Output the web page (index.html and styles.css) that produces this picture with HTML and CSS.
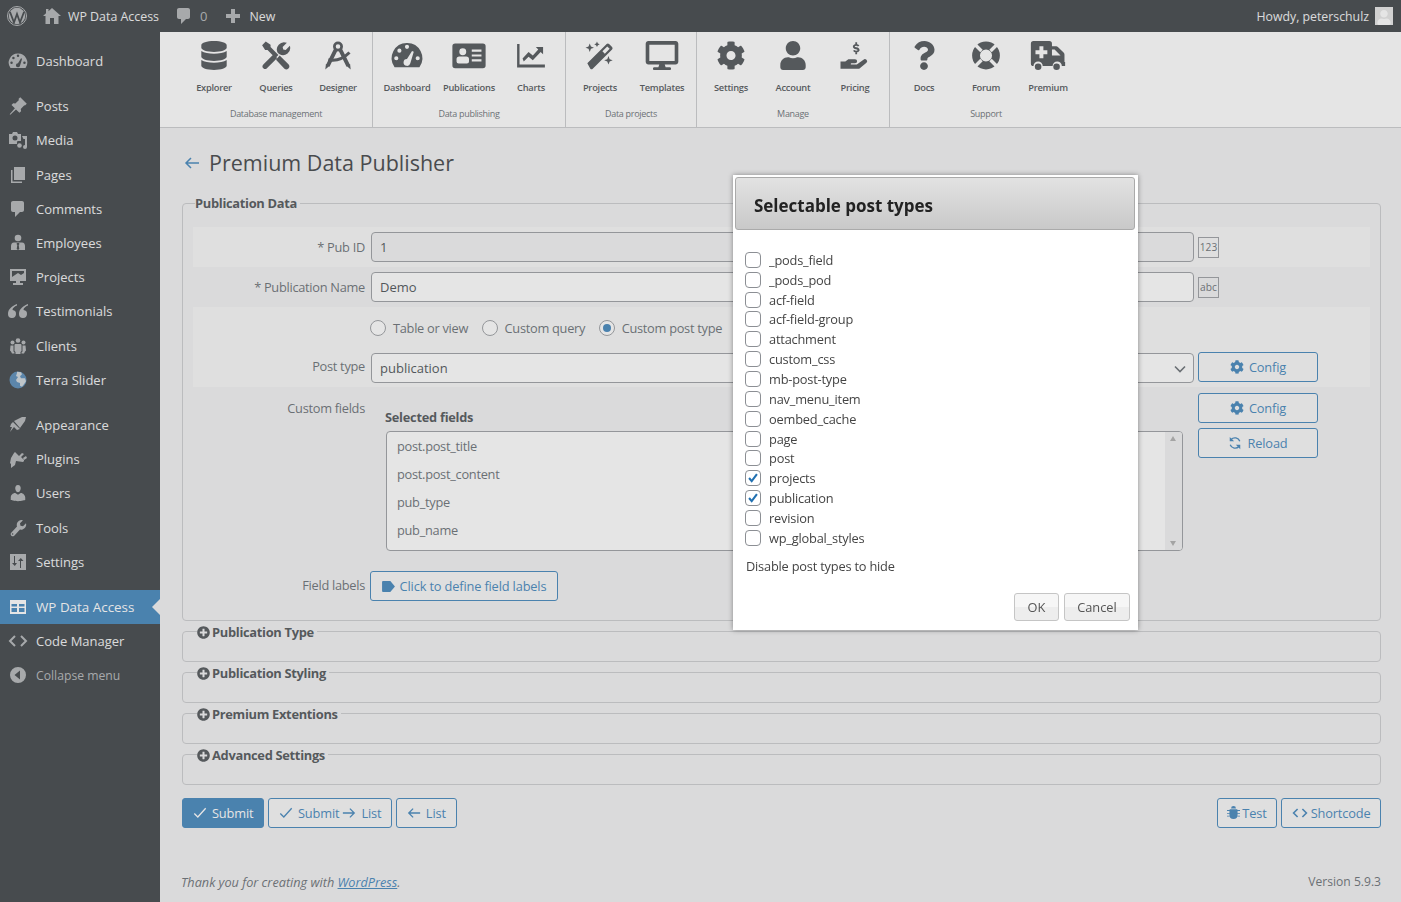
FILE: index.html
```html
<!DOCTYPE html>
<html lang="en">
<head>
<meta charset="utf-8">
<title>Premium Data Publisher</title>
<link rel="stylesheet" href="styles.css">
</head>
<body>
<svg class="defs" aria-hidden="true">
  <symbol id="i-db" viewBox="0 0 448 512"><path d="M448 73.143v45.714C448 159.143 347.667 192 224 192S0 159.143 0 118.857V73.143C0 32.857 100.333 0 224 0s224 32.857 224 73.143zM448 176v102.857C448 319.143 347.667 352 224 352S0 319.143 0 278.857V176c48.125 33.143 136.208 48.572 224 48.572S399.874 209.143 448 176zm0 160v102.857C448 479.143 347.667 512 224 512S0 479.143 0 438.857V336c48.125 33.143 136.208 48.572 224 48.572S399.874 369.143 448 336z"/></symbol>
  <symbol id="i-tools" viewBox="0 0 48 48"><path d="M1 7l6-6 8 5v4l13 13-5 5-13-13H6zM30 24l15 15a5 5 0 0 1-7 7L24 31zM3 39l17-17 6 6L9 45a4 4 0 0 1-6-6zM27 20A12 12 0 0 1 42 3l-7 7 1 4 4 1 7-7a12 12 0 0 1-17 14z"/></symbol>
  <symbol id="i-compass" viewBox="0 0 48 48"><g fill="none" stroke="currentColor"><circle cx="24" cy="9" r="6" stroke-width="4.500"/><path d="M20.500 14L7 41M27.500 14L41 41" stroke-width="6.500"/><path d="M8 31Q27 35 43 19" stroke-width="5"/></g><path d="M3 47l1-9 6 3zM45 47l-1-9-6 3z"/></symbol>
  <symbol id="i-gauge" viewBox="0 1 48 42"><path fill-rule="evenodd" d="M24 4a22 22 0 0 1 18 35H6A22 22 0 0 1 24 4zM21 9.500a3 3 0 1 0 6 0a3 3 0 1 0-6 0zM10 15a3 3 0 1 0 6 0a3 3 0 1 0-6 0zM5.500 26a3 3 0 1 0 6 0a3 3 0 1 0-6 0zM36.500 26a3 3 0 1 0 6 0a3 3 0 1 0-6 0zM19 32a5 5 0 0 0 9.800 1.400l5-17-2.500-1-7.300 11.700a5 5 0 0 0-5 4.900z"/></symbol>
  <symbol id="i-idcard" viewBox="-2 4 52 39"><path fill-rule="evenodd" d="M4 6h40a4 4 0 0 1 4 4v28a4 4 0 0 1-4 4H4a4 4 0 0 1-4-4V10a4 4 0 0 1 4-4zM10 18a5 5 0 1 0 10 0a5 5 0 1 0-10 0zM6 32a3 3 0 0 0 3 3h12a3 3 0 0 0 3-3v-3a4 4 0 0 0-4-4h-10a4 4 0 0 0-4 4zM28 15v3h14v-3zM28 22v3h14v-3zM28 29v3h14v-3z"/></symbol>
  <symbol id="i-chart" viewBox="0 0 48 48"><path d="M1 5h4v34h42v5H1zM10 29l10-11 7 6 9-10-4-4h12v12l-4-4-13 14-7-6-8 8z"/></symbol>
  <symbol id="i-wand" viewBox="0 0 48 48"><path fill-rule="evenodd" d="M3 37l32-32a3 3 0 0 1 4 0l5 5a3 3 0 0 1 0 4L12 46a3 3 0 0 1-4 0zM28 17l4 4 8-8-4-4z"/><path d="M7 4l2 5 5 2-5 2-2 5-2-5-5-2 5-2zM19 1l1.500 3 3 1.500-3 1.500L19 10l-1.500-3-3-1.500 3-1.500zM38 25l2 5 5 2-5 2-2 5-2-5-5-2 5-2z"/></symbol>
  <symbol id="i-desktop" viewBox="0 0 576 512"><path d="M528 0H48C21.500 0 0 21.500 0 48v320c0 26.500 21.500 48 48 48h192l-16 48h-72c-13.300 0-24 10.700-24 24s10.700 24 24 24h272c13.300 0 24-10.700 24-24s-10.700-24-24-24h-72l-16-48h192c26.500 0 48-21.500 48-48V48c0-26.500-21.500-48-48-48zm-16 352H64V64h448v288z"/></symbol>
  <symbol id="i-cog" viewBox="0 0 512 512"><path d="M487.400 315.700l-42.600-24.600c4.300-23.200 4.300-47 0-70.200l42.600-24.600c4.900-2.800 7.100-8.600 5.500-14-11.100-35.600-30-67.800-54.700-94.600-3.800-4.100-10-5.100-14.800-2.300L380.800 110c-17.900-15.400-38.500-27.300-60.800-35.100V25.800c0-5.600-3.900-10.500-9.400-11.700-36.700-8.200-74.300-7.800-109.200 0-5.500 1.200-9.400 6.100-9.400 11.700V75c-22.200 7.900-42.800 19.800-60.800 35.100L88.700 85.500c-4.900-2.800-11-1.900-14.800 2.300-24.700 26.700-43.600 58.900-54.700 94.600-1.700 5.400.6 11.200 5.500 14L67.300 221c-4.300 23.200-4.300 47 0 70.200l-42.600 24.600c-4.900 2.800-7.100 8.600-5.500 14 11.100 35.600 30 67.800 54.700 94.600 3.800 4.100 10 5.100 14.800 2.300l42.600-24.600c17.900 15.400 38.500 27.300 60.800 35.100v49.200c0 5.600 3.900 10.500 9.400 11.700 36.700 8.200 74.300 7.800 109.200 0 5.500-1.200 9.400-6.100 9.400-11.700v-49.200c22.200-7.900 42.800-19.800 60.800-35.100l42.600 24.600c4.900 2.800 11 1.900 14.800-2.300 24.700-26.700 43.600-58.900 54.700-94.600 1.500-5.500-.7-11.300-5.600-14.100zM256 336c-44.100 0-80-35.900-80-80s35.900-80 80-80 80 35.900 80 80-35.900 80-80 80z"/></symbol>
  <symbol id="i-user" viewBox="0 0 448 512"><path d="M224 256c70.700 0 128-57.300 128-128S294.700 0 224 0 96 57.300 96 128s57.300 128 128 128zm89.600 32h-16.700c-22.200 10.200-46.900 16-72.900 16s-50.600-5.800-72.900-16h-16.700C60.200 288 0 348.200 0 422.400V464c0 26.500 21.500 48 48 48h352c26.500 0 48-21.500 48-48v-41.600c0-74.200-60.200-134.400-134.400-134.400z"/></symbol>
  <symbol id="i-hand" viewBox="0 0 48 48"><path d="M0 34h8l5-4h11a3 3 0 0 1 0 7h-6a1 1 0 0 0 0 2h9l11-8a3.500 3.500 0 0 1 5 5L31 46H0z"/><path d="M30 8.500q-1-2-4-2t-4 2q0 3 4 3.500t4 3.500q-1 2-4 2t-4-2M26 2v4M26 18v4" fill="none" stroke="currentColor" stroke-width="3"/></symbol>
  <symbol id="i-question" viewBox="0 0 384 512"><path d="M202.021 0C122.202 0 70.503 32.703 29.914 91.026c-7.363 10.580-5.093 25.086 5.178 32.874l43.138 32.709c10.373 7.865 25.132 6.026 33.253-4.148 25.049-31.381 43.630-49.449 82.757-49.449 30.764 0 68.816 19.799 68.816 49.631 0 22.552-18.617 34.134-48.993 51.164-35.423 19.860-82.299 44.576-82.299 106.405V320c0 13.255 10.745 24 24 24h72.471c13.255 0 24-10.745 24-24v-5.773c0-42.860 125.268-44.645 125.268-160.627C377.504 66.256 286.902 0 202.021 0zM192 373.459c-38.196 0-69.271 31.075-69.271 69.271 0 38.195 31.075 69.270 69.271 69.270s69.271-31.075 69.271-69.271-31.075-69.270-69.271-69.270z"/></symbol>
  <symbol id="i-ring" viewBox="0 0 48 48"><path fill-rule="evenodd" d="M24 1a23 23 0 1 1 0 46a23 23 0 0 1 0-46zM14 24a10 10 0 1 0 20 0a10 10 0 1 0-20 0z"/><path class="ring-gap" d="M9 5l9.500 9.500-4 4L5 9zM39 5L29.500 14.500l4 4L43 9zM9 43l9.500-9.500-4-4L5 39zM39 43l-9.500-9.500 4-4L43 39z"/></symbol>
  <symbol id="i-amb" viewBox="0 2 52 44"><path fill-rule="evenodd" d="M4 2h24a4 4 0 0 1 4 4v4h6a4 4 0 0 1 3 1l9 9a4 4 0 0 1 1 3v11h1v6h-5a7 7 0 0 0-14 0H18a7 7 0 0 0-14 0 4 4 0 0 1-4-4V6a4 4 0 0 1 4-4zM13 10v6H7v6h6v6h6v-6h6v-6h-6v-6zM32 15v9h13l-9-9z"/><circle cx="11" cy="41" r="5"/><circle cx="39" cy="41" r="5"/></symbol>
  <symbol id="i-plus" viewBox="0 0 512 512"><path d="M256 8C119 8 8 119 8 256s111 248 248 248 248-111 248-248S393 8 256 8zm144 276c0 6.600-5.400 12-12 12h-92v92c0 6.600-5.400 12-12 12h-56c-6.600 0-12-5.400-12-12v-92h-92c-6.600 0-12-5.400-12-12v-56c0-6.600 5.400-12 12-12h92v-92c0-6.600 5.400-12 12-12h56c6.600 0 12 5.400 12 12v92h92c6.600 0 12 5.400 12 12v56z"/></symbol>
  <symbol id="i-check" viewBox="0 0 16 16"><path d="M1.500 8.500l4 4 9-10" fill="none" stroke="currentColor" stroke-width="1.500"/></symbol>
  <symbol id="i-right" viewBox="0 0 16 16"><path d="M1 8h13M9 3l5 5-5 5" fill="none" stroke="currentColor" stroke-width="1.500"/></symbol>
  <symbol id="i-left" viewBox="0 0 16 16"><path d="M15 8H2M7 3L2 8l5 5" fill="none" stroke="currentColor" stroke-width="1.500"/></symbol>
  <symbol id="i-code" viewBox="0 0 20 14"><path d="M7 2L2 7l5 5M13 2l5 5-5 5" fill="none" stroke="currentColor" stroke-width="2"/></symbol>
  <symbol id="i-bug" viewBox="0 0 16 16"><path d="M5 3a3 3 0 0 1 6 0zM4 4h8a1 1 0 0 1 1 1v6a5 5 0 0 1-10 0V5a1 1 0 0 1 1-1zM0 5h3v1H0zM13 5h3v1h-3zM0 8.500h3v1H0zM13 8.500h3v1h-3zM0 12h3v1H0zM13 12h3v1h-3z"/></symbol>
  <symbol id="i-sync" viewBox="0 0 16 16"><path d="M13.500 6A6 6 0 0 0 3.500 4M2.500 10a6 6 0 0 0 10 2" fill="none" stroke="currentColor" stroke-width="1.500"/><path d="M2 1v5h5zM14 15v-5H9z"/></symbol>
  <symbol id="i-tag" viewBox="0 0 14 12"><path d="M1 0h8l5 6-5 6H1a1 1 0 0 1-1-1V1a1 1 0 0 1 1-1z"/></symbol>
  <symbol id="d-pin" viewBox="0 0 20 20"><path d="M10.440 3.020l1.820-1.820 6.530 6.530-1.820 1.820-.630-.2-3.600 3.610.350 2.200-1.700 1.700-3.400-3.400-5.700 5.300-.6-.6 5.200-5.800-3.400-3.400 1.700-1.700 2.200.3 3.600-3.600z"/></symbol>
  <symbol id="d-media" viewBox="0 0 20 20"><path fill-rule="evenodd" d="M1 4h3l1-2h4l1 2h3v7H9.500a4 4 0 0 0-.5 3H1zM4.500 8a2.500 2.500 0 1 0 5 0a2.500 2.500 0 1 0-5 0z"/><path d="M14 6h5v11a2 2 0 1 1-2-2V9h-1.500z"/><circle cx="11.500" cy="15.500" r="2.300"/></symbol>
  <symbol id="d-pages" viewBox="0 0 20 20"><path d="M6 2h11v13H6z"/><path d="M3 5h1.500v11.500H14V18H3z"/></symbol>
  <symbol id="d-comment" viewBox="0 0 20 20"><path d="M5 2h9c1.100 0 2 .9 2 2v7c0 1.100-.9 2-2 2h-2l-5 5v-5H5c-1.100 0-2-.9-2-2V4c0-1.100.9-2 2-2z"/></symbol>
  <symbol id="d-emp" viewBox="0 0 20 20"><circle cx="10" cy="5" r="3.300"/><path fill-rule="evenodd" d="M6 9.500h8c2 0 3 1.800 3 3.500v4H3v-4c0-1.700 1-3.500 3-3.500zM9 10l-.5 1 .8 1-.6 4 1.300 1 1.300-1-.6-4 .8-1-.5-1z"/></symbol>
  <symbol id="d-monitor" viewBox="0 0 20 20"><path fill-rule="evenodd" d="M2 2h16v12h-6v2h3v2H5v-2h3v-2H2zM4 4v6l6-4 3 2 3-2V4z"/></symbol>
  <symbol id="d-quote" viewBox="0 0 20 20"><path d="M9 3C4 5 0 8 0 13a4 4 0 1 0 4.500-4c0-2 2-3.500 4.500-4.500zM20 3c-5 2-9 5-9 10a4 4 0 1 0 4.500-4c0-2 2-3.500 4.500-4.500z"/></symbol>
  <symbol id="d-group" viewBox="0 0 20 20"><circle cx="10" cy="4.500" r="2.300"/><circle cx="4.500" cy="6.500" r="2"/><circle cx="15.500" cy="6.500" r="2"/><path d="M7.500 8h5a1 1 0 0 1 1 1v6l-1 1v2h-5v-2l-1-1V9a1 1 0 0 1 1-1zM2.500 9.500h3v6l1 1v1H4l-1-2-1-1zM14.500 9.500h3l.5 5-1 1-1 2h-2.500v-1l1-1z"/></symbol>
  <symbol id="d-globe" viewBox="0 0 20 20"><circle class="globe-sea" cx="10" cy="10" r="8.500"/><path class="globe-land" d="M9 1.800l4 .5 1 2-2 2 1 2h4l1 3-2 3-2 2.500-2-1V13l-3-1-1-2 2-3-2-1 1-3z"/></symbol>
  <symbol id="d-brush" viewBox="0 0 20 20"><path d="M6 6l8-4 4 0-1 4-5 7zM5 7l7 7-3 1-3-3-4 5 2-5-2 0 1-3z"/></symbol>
  <symbol id="d-plug" viewBox="0 0 20 20"><path d="M7 3l4 4 3-3 2 1-3 3 3 3 0 1-1 1-7-1-1 4-4 3 0-4-1-1 1-5 3-5zM15 9l3-2 1 2-3 2z"/></symbol>
  <symbol id="d-users" viewBox="0 0 20 20"><path d="M10 9.250c-2.270 0-2.730-3.440-2.730-3.440C7 4.020 7.820 2 9.970 2c2.160 0 2.980 2.020 2.710 3.810 0 0-.41 3.440-2.680 3.440zm0 2.570L12.720 10c2.390 0 4.520 2.330 4.520 4.530v2.490s-3.650 1.130-7.240 1.130c-3.650 0-7.240-1.130-7.240-1.130v-2.490c0-2.250 1.940-4.480 4.470-4.480z"/></symbol>
  <symbol id="d-wrench" viewBox="0 0 20 20"><path fill-rule="evenodd" d="M13 2a5 5 0 0 1 2 .3l-3 3 .5 2.500 2.500.5 3-3A5 5 0 0 1 12 11.500L6 18a2.200 2.200 0 0 1-3-3l6-6.500A5 5 0 0 1 13 2zM3.800 16a.8.8 0 1 0 1.600 0a.8.8 0 1 0-1.600 0z"/></symbol>
  <symbol id="d-sliders" viewBox="0 0 20 20"><path fill-rule="evenodd" d="M2 2h16v16H2zM6 4v7H4l2.800 3L9 11H7V4zM12 16h1v-7h2.500L12.800 6 10 9h2z"/></symbol>
  <symbol id="d-table" viewBox="0 0 20 20"><path fill-rule="evenodd" d="M2 3h16v14H2zM3.500 7v2.500H9V7zM11 7v2.500h5.500V7zM3.500 11v4H9v-4zM11 11v4h5.500v-4z"/></symbol>
  <symbol id="d-collapse" viewBox="0 0 20 20"><path fill-rule="evenodd" d="M10 2a8 8 0 1 1 0 16a8 8 0 0 1 0-16zM12 5.500L6.500 10l5.500 4.500z"/></symbol>
  <symbol id="d-home" viewBox="0 0 20 20"><path d="M10 2l9 8h-2.500v8H12v-6H8v6H3.500v-8H1l3-2.700V3h2.500v2.200z"/></symbol>
  <symbol id="d-cross" viewBox="0 0 20 20"><path d="M8 3h4v5h5v4h-5v5H8v-5H3V8h5z"/></symbol>
  <symbol id="d-wp" viewBox="0 0 20 20"><circle cx="10" cy="10" r="9.500" fill="none" stroke="currentColor"/><circle cx="10" cy="10" r="8.200"/><path class="wp-w" d="M3 6l4 10.500L10 8l3 8.500L17 6" fill="none" stroke-width="1.800"/></symbol>
</svg>

<header class="adminbar">
  <div class="bar-left">
    <svg class="bar-wp"><use href="#d-wp"/></svg>
    <a class="bar-item site"><svg class="bar-ico"><use href="#d-home"/></svg><span>WP Data Access</span></a>
    <a class="bar-item comments"><svg class="bar-ico small"><use href="#d-comment"/></svg><span class="zero">0</span></a>
    <a class="bar-item new"><svg class="bar-ico small"><use href="#d-cross"/></svg><span>New</span></a>
  </div>
  <div class="bar-right">
    <span>Howdy, peterschulz</span>
    <span class="avatar"><svg><use href="#i-user"/></svg></span>
  </div>
</header>

<div class="shell">
  <nav class="sidebar">
    <a class="menu"><svg><use href="#i-gauge"/></svg><span>Dashboard</span></a>
    <div class="sep"></div>
    <a class="menu"><svg><use href="#d-pin"/></svg><span>Posts</span></a>
    <a class="menu"><svg><use href="#d-media"/></svg><span>Media</span></a>
    <a class="menu"><svg><use href="#d-pages"/></svg><span>Pages</span></a>
    <a class="menu"><svg><use href="#d-comment"/></svg><span>Comments</span></a>
    <a class="menu"><svg><use href="#d-emp"/></svg><span>Employees</span></a>
    <a class="menu"><svg><use href="#d-monitor"/></svg><span>Projects</span></a>
    <a class="menu"><svg><use href="#d-quote"/></svg><span>Testimonials</span></a>
    <a class="menu"><svg><use href="#d-group"/></svg><span>Clients</span></a>
    <a class="menu"><svg><use href="#d-globe"/></svg><span>Terra Slider</span></a>
    <div class="sep"></div>
    <a class="menu"><svg><use href="#d-brush"/></svg><span>Appearance</span></a>
    <a class="menu"><svg><use href="#d-plug"/></svg><span>Plugins</span></a>
    <a class="menu"><svg><use href="#d-users"/></svg><span>Users</span></a>
    <a class="menu"><svg><use href="#d-wrench"/></svg><span>Tools</span></a>
    <a class="menu"><svg><use href="#d-sliders"/></svg><span>Settings</span></a>
    <div class="sep"></div>
    <a class="menu active"><svg><use href="#d-table"/></svg><span>WP Data Access</span></a>
    <a class="menu"><svg><use href="#i-code"/></svg><span>Code Manager</span></a>
    <a class="menu muted"><svg><use href="#d-collapse"/></svg><span>Collapse menu</span></a>
  </nav>

  <div class="main">
    <div class="toolbar">
      <section class="tgroup">
        <div class="titems">
          <a class="titem"><svg><use href="#i-db"/></svg><span>Explorer</span></a>
          <a class="titem"><svg><use href="#i-tools"/></svg><span>Queries</span></a>
          <a class="titem"><svg><use href="#i-compass"/></svg><span>Designer</span></a>
        </div>
        <div class="tcap">Database management</div>
      </section>
      <section class="tgroup">
        <div class="titems">
          <a class="titem"><svg><use href="#i-gauge"/></svg><span>Dashboard</span></a>
          <a class="titem"><svg><use href="#i-idcard"/></svg><span>Publications</span></a>
          <a class="titem"><svg><use href="#i-chart"/></svg><span>Charts</span></a>
        </div>
        <div class="tcap">Data publishing</div>
      </section>
      <section class="tgroup">
        <div class="titems">
          <a class="titem"><svg><use href="#i-wand"/></svg><span>Projects</span></a>
          <a class="titem"><svg><use href="#i-desktop"/></svg><span>Templates</span></a>
        </div>
        <div class="tcap">Data projects</div>
      </section>
      <section class="tgroup">
        <div class="titems">
          <a class="titem"><svg><use href="#i-cog"/></svg><span>Settings</span></a>
          <a class="titem"><svg><use href="#i-user"/></svg><span>Account</span></a>
          <a class="titem"><svg><use href="#i-hand"/></svg><span>Pricing</span></a>
        </div>
        <div class="tcap">Manage</div>
      </section>
      <section class="tgroup last">
        <div class="titems">
          <a class="titem"><svg><use href="#i-question"/></svg><span>Docs</span></a>
          <a class="titem"><svg><use href="#i-ring"/></svg><span>Forum</span></a>
          <a class="titem"><svg><use href="#i-amb"/></svg><span>Premium</span></a>
        </div>
        <div class="tcap">Support</div>
      </section>
    </div>

    <div class="page">
      <h1 class="title"><svg class="back"><use href="#i-left"/></svg><span>Premium Data Publisher</span></h1>

      <fieldset class="fs main-fs">
        <legend>Publication Data</legend>
        <div class="row stripe">
          <label class="lbl">* Pub ID</label>
          <div class="input disabled">1</div>
          <span class="type-box">123</span>
        </div>
        <div class="row">
          <label class="lbl">* Publication Name</label>
          <div class="input">Demo</div>
          <span class="type-box">abc</span>
        </div>
        <div class="stripe type-block">
          <div class="radios">
            <span class="radio"></span><span class="rtext">Table or view</span>
            <span class="radio"></span><span class="rtext">Custom query</span>
            <span class="radio on"></span><span class="rtext">Custom post type</span>
          </div>
          <div class="post-row">
            <label class="lbl">Post type</label>
            <div class="input select">publication<svg class="chev" viewBox="0 0 12 8"><path d="M1 1.500l5 5 5-5" fill="none" stroke="currentColor" stroke-width="1.600"/></svg></div>
            <a class="btn wide"><svg class="bi"><use href="#i-cog"/></svg>Config</a>
          </div>
        </div>
        <div class="fields-row">
          <label class="lbl top">Custom fields</label>
          <div class="fields-col">
            <div class="sel-head">Selected fields</div>
            <div class="listbox">
              <div class="litems">
                <div>post.post_title</div>
                <div>post.post_content</div>
                <div>pub_type</div>
                <div>pub_name</div>
              </div>
              <div class="scroll"><i class="up"></i><i class="down"></i></div>
            </div>
          </div>
          <div class="fields-btns">
            <a class="btn wide"><svg class="bi"><use href="#i-cog"/></svg>Config</a>
            <a class="btn wide"><svg class="bi"><use href="#i-sync"/></svg>Reload</a>
          </div>
        </div>
        <div class="labels-row">
          <label class="lbl">Field labels</label>
          <a class="btn lblbtn"><svg class="bi tag"><use href="#i-tag"/></svg>Click to define field labels</a>
        </div>
      </fieldset>

      <fieldset class="fs closed"><legend><svg><use href="#i-plus"/></svg>Publication Type</legend></fieldset>
      <fieldset class="fs closed"><legend><svg><use href="#i-plus"/></svg>Publication Styling</legend></fieldset>
      <fieldset class="fs closed"><legend><svg><use href="#i-plus"/></svg>Premium Extentions</legend></fieldset>
      <fieldset class="fs closed"><legend><svg><use href="#i-plus"/></svg>Advanced Settings</legend></fieldset>

      <div class="actions">
        <div class="act-group">
          <a class="btn primary"><svg class="bi"><use href="#i-check"/></svg>Submit</a>
          <a class="btn tight"><svg class="bi"><use href="#i-check"/></svg>Submit<svg class="bi mid"><use href="#i-right"/></svg>List</a>
          <a class="btn"><svg class="bi"><use href="#i-left"/></svg>List</a>
        </div>
        <div class="act-group">
          <a class="btn tight"><svg class="bi bug"><use href="#i-bug"/></svg>Test</a>
          <a class="btn tight"><svg class="bi code"><use href="#i-code"/></svg>Shortcode</a>
        </div>
      </div>

      <footer class="foot">
        <em>Thank you for creating with <a>WordPress</a>.</em>
        <span>Version 5.9.3</span>
      </footer>
    </div>
  </div>
</div>

<div class="overlay"></div>

<div class="dialog" role="dialog">
  <div class="dlg-title">Selectable post types</div>
  <div class="dlg-list">
    <label><span class="cb"></span>_pods_field</label>
    <label><span class="cb"></span>_pods_pod</label>
    <label><span class="cb"></span>acf-field</label>
    <label><span class="cb"></span>acf-field-group</label>
    <label><span class="cb"></span>attachment</label>
    <label><span class="cb"></span>custom_css</label>
    <label><span class="cb"></span>mb-post-type</label>
    <label><span class="cb"></span>nav_menu_item</label>
    <label><span class="cb"></span>oembed_cache</label>
    <label><span class="cb"></span>page</label>
    <label><span class="cb"></span>post</label>
    <label><span class="cb"><svg viewBox="0 0 16 16"><path d="M3.500 8l3 3.500L12.500 3.500" fill="none" stroke="currentColor" stroke-width="2.400"/></svg></span>projects</label>
    <label><span class="cb"><svg viewBox="0 0 16 16"><path d="M3.500 8l3 3.500L12.500 3.500" fill="none" stroke="currentColor" stroke-width="2.400"/></svg></span>publication</label>
    <label><span class="cb"></span>revision</label>
    <label><span class="cb"></span>wp_global_styles</label>
  </div>
  <p class="dlg-note">Disable post types to hide</p>
  <div class="dlg-btns">
    <a class="dbtn ok">OK</a>
    <a class="dbtn cancel">Cancel</a>
  </div>
</div>
</body>
</html>
```

FILE: styles.css
```css
* { box-sizing: border-box; }
html, body { margin: 0; padding: 0; height: 100%; }
body {
  position: relative;
  height: 902px;
  overflow: hidden;
  background: #f0f0f1;
  color: #3c434a;
  font-family: "Open Sans", "Liberation Sans", sans-serif;
  font-size: 13px;
}
a { color: inherit; text-decoration: none; }
.defs { display: none; }

/* admin bar */
.adminbar {
  height: 32px;
  background: #1d2327;
  color: #f0f0f1;
  display: flex;
  justify-content: space-between;
  align-items: center;
  font-size: 12.400px;
}
.bar-left, .bar-right { display: flex; align-items: center; }
.bar-wp { width: 20px; height: 20px; margin-left: 7px; color: #a7aaad; fill: #a7aaad; }
.wp-w { stroke: #1d2327; }
.bar-item { display: flex; align-items: center; }
.bar-ico { width: 20px; height: 20px; color: #a7aaad; fill: #a7aaad; }
.site { margin-left: 15px; }
.site .bar-ico { margin-right: 6px; }
.comments { margin-left: 15px; }
.comments .bar-ico { margin-right: 6px; }
.zero { color: #a7aaad; font-size: 13px; }
.new { margin-left: 16px; }
.new .bar-ico { margin-right: 6px; }
.bar-right { margin-right: 8px; gap: 6px; font-size: 12.300px; }
.avatar { width: 18px; height: 18px; background: #e2e2e2; display: flex; align-items: flex-end; justify-content: center; }
.avatar svg { width: 14px; height: 15px; fill: #fff; }

/* shell */
.shell { display: flex; height: 870px; }
.sidebar {
  width: 160px;
  flex: none;
  background: #1d2327;
  padding-top: 12px;
  color: #f0f0f1;
}
.menu {
  display: flex;
  align-items: center;
  height: 34.200px;
  padding-left: 8px;
  font-size: 13px;
  position: relative;
}
.menu svg { width: 20px; height: 20px; margin-right: 8px; fill: #a7aaad; color: #a7aaad; flex: none; }
.sep { height: 11px; }
.globe-sea { fill: #3c78ad; }
.globe-land { fill: #c9d1d7; }
.ring-gap { fill: #fff; }
.active { background: #2271b1; color: #fff; font-size: 13.400px; }
.active svg { fill: #fff; color: #fff; }
.active::after {
  content: "";
  position: absolute;
  right: 0;
  top: 9px;
  border: 8px solid transparent;
  border-right-color: #f0f0f1;
  border-left-width: 0;
}
.muted { color: #a7aaad; font-size: 12.200px; }

/* toolbar */
.main { flex: 1; min-width: 0; display: flex; flex-direction: column; }
.toolbar {
  height: 96px;
  flex: none;
  background: #fff;
  border-bottom: 1px solid #c3c4c7;
  display: flex;
  padding-left: 20px;
}
.tgroup {
  padding: 0 3px;
  border-right: 1px solid #c3c4c7;
  display: flex;
  flex-direction: column;
  align-items: center;
}
.tgroup.last { border-right: 0; }
.titems { display: flex; }
.titem {
  width: 62px;
  height: 74px;
  display: flex;
  flex-direction: column;
  align-items: center;
  color: #32373c;
  font-size: 9.300px;
  font-weight: 600;
  letter-spacing: -.25px;
  padding-top: 9px;
}
.titem svg { width: 36px; height: 29px; fill: currentColor; color: #32373c; }
.titem span { margin-top: 11px; line-height: 13px; white-space: nowrap; }
.tcap { font-size: 9px; letter-spacing: -.3px; color: #50575e; line-height: 13px; margin-top: 1px; }

/* page */
.page { padding: 0 20px 0 22px; flex: 1; display: flex; flex-direction: column; }
.title {
  display: flex;
  align-items: center;
  margin: 19px 0 0 2px;
  height: 31px;
  font-size: 21.500px;
  font-weight: 400;
  color: #1d2327;
}
.back { width: 16px; height: 16px; margin-right: 9px; color: #2271b1; }
.fs {
  margin: 0;
  padding: 0 10px;
  border: 1px solid #c3c4c7;
  border-radius: 4px;
  min-width: 0;
}
.fs legend {
  padding: 0;
  margin-left: 2px;
  font-size: 12.900px;
  font-weight: 700;
  letter-spacing: -.32px;
  color: #32373c;
  line-height: 18px;
  display: flex;
  align-items: center;
}
.main-fs { margin-top: 16px; height: 427.400px; padding-bottom: 0; }
.main-fs legend { padding-right: 3px; }
.closed { height: 40.900px; }
.closed legend { margin-left: 4px; padding: 2px 3px 0 0; }
.closed legend svg { width: 13px; height: 13px; margin-right: 2px; fill: #32373c; }

.row {
  height: 40px;
  display: flex;
  align-items: center;
}
.main-fs .row:first-of-type { margin-top: 15px; }
.stripe { background: #f7f7f7; }
.lbl {
  width: 172px;
  flex: none;
  margin-right: 6px;
  text-align: right;
  color: #50575e;
  font-size: 12.800px;
  letter-spacing: -.28px;
}
.input {
  width: 823px;
  flex: none;
  height: 30px;
  background: #fff;
  border: 1px solid #8c8f94;
  border-radius: 4px;
  padding: 0 8px;
  line-height: 29px;
  font-size: 13px;
  color: #2c3338;
  position: relative;
}
.disabled { background: #f0f0f1; }
.type-box {
  width: 21px;
  height: 21px;
  margin-left: 4px;
  border: 1px solid #8c8f94;
  font-size: 10.200px;
  line-height: 19px;
  text-align: center;
  color: #50575e;
}
.type-block { height: 80px; }
.radios {
  display: flex;
  align-items: center;
  height: 46px;
  padding-left: 177px;
  padding-bottom: 4px;
}
.radio {
  width: 16px;
  height: 16px;
  border: 1px solid #8c8f94;
  border-radius: 50%;
  background: #fff;
  position: relative;
  flex: none;
}
.radio.on::after {
  content: "";
  position: absolute;
  inset: 3px;
  border-radius: 50%;
  background: #2271b1;
}
.rtext { margin: 0 13.500px 0 7px; color: #50575e; font-size: 12.800px; letter-spacing: -.28px; }
.post-row { display: flex; align-items: flex-start; }
.post-row .lbl { line-height: 26px; }
.select .chev { position: absolute; right: 7px; top: 11px; width: 12px; height: 8px; color: #50575e; }
.post-row .btn { margin-left: 4px; margin-top: -1px; }

.btn {
  display: inline-flex;
  align-items: center;
  justify-content: center;
  height: 30px;
  padding: 0 10px;
  background: #f6f7f7;
  border: 1px solid #2271b1;
  border-radius: 3px;
  color: #2271b1;
  font-size: 12.800px;
  letter-spacing: -.15px;
  white-space: nowrap;
}
.btn.wide { width: 120px; }
.btn.tight { padding: 0 9.500px; }
.bi { width: 14px; height: 14px; margin-right: 5px; fill: currentColor; color: #2271b1; flex: none; }
.primary { background: #2271b1; color: #fff; }
.primary .bi { color: #fff; }
.bi.mid { margin: 0 5px 0 3px; }
.bi.code { width: 16px; height: 12px; margin-right: 3px; }
.bi.bug { margin-right: 2px; width: 13px; height: 13px; }
.bi.tag { width: 13px; height: 11px; margin-right: 5px; }

.fields-row { display: flex; position: relative; height: 184px; padding-top: 6px; }
.top { padding-top: 6px; line-height: 18px; }
.fields-col { width: 812px; flex: none; margin-left: 15px; }
.sel-head { font-weight: 700; color: #32373c; font-size: 12.800px; letter-spacing: -.25px; line-height: 18px; margin-top: 15px; margin-bottom: 5px; margin-left: -1px; }
.listbox {
  width: 797px;
  height: 120px;
  border: 1px solid #8c8f94;
  border-radius: 4px;
  background: #fff;
  display: flex;
  justify-content: space-between;
  overflow: hidden;
}
.litems { padding: 0 0 0 10px; color: #50575e; font-size: 12.800px; letter-spacing: -.28px; }
.litems div { height: 28px; line-height: 28px; }
.scroll { width: 17px; background: #f0f0f1; position: relative; }
.scroll i { position: absolute; left: 5px; width: 0; height: 0; border: 4px solid transparent; border-left-width: 3.500px; border-right-width: 3.500px; }
.scroll .up { top: 4px; border-top: 0; border-bottom: 5px solid #a3a3a3; }
.scroll .down { bottom: 4px; border-bottom: 0; border-top: 5px solid #a3a3a3; }
.fields-btns { display: flex; flex-direction: column; gap: 5px; }

.labels-row { display: flex; align-items: center; }
.labels-row .lbl { margin-right: 5px; line-height: 16px; padding-bottom: 2px; }
.lblbtn { width: 188px; padding: 0; }

.actions {
  display: flex;
  justify-content: space-between;
  margin-top: 13px;
}
.act-group { display: flex; gap: 4px; }
.foot {
  display: flex;
  justify-content: space-between;
  align-items: center;
  margin: 45px 0 0 -1px;
  font-size: 12.100px;
  color: #50575e;
  line-height: 18px;
}
.foot em { font-size: 12.700px; }
.foot a { color: #2271b1; text-decoration: underline; }

/* overlay + dialog */
.overlay {
  position: fixed;
  inset: 0;
  background: #aaa;
  opacity: .3;
}
.dialog {
  position: absolute;
  left: 733px;
  top: 175px;
  width: 405px;
  height: 455px;
  background: #fff;
  padding: 2px;
  box-shadow: 0 0 5px rgba(0, 0, 0, .4);
  color: #333;
  font-size: 12.800px;
}
.dlg-title {
  height: 53px;
  margin-right: 1px;
  border: 1px solid #aaa;
  border-radius: 3px;
  background: linear-gradient(#e2e2e2, #c9c9c9);
  color: #222;
  font-weight: 700;
  font-size: 17px;
  letter-spacing: -.02px;
  line-height: 55px;
  padding-left: 18px;
}
.dlg-list { padding: 20px 0 0 10px; }
.dlg-list label { display: flex; align-items: center; height: 19.850px; color: #444; letter-spacing: -.2px; }
.cb {
  width: 16px;
  height: 16px;
  border: 1px solid #8c8f94;
  border-radius: 4px;
  margin-right: 8px;
  flex: none;
  color: #2271b1;
  display: flex;
}
.cb svg { width: 14px; height: 14px; }
.dlg-note { margin: 9px 0 0 11px; line-height: 18px; color: #444; letter-spacing: -.2px; }
.dlg-btns { display: flex; gap: 5px; position: absolute; right: 8px; bottom: 9px; }
.dbtn {
  height: 28px;
  line-height: 26px;
  text-align: center;
  border: 1px solid #c5c5c5;
  border-radius: 3px;
  background: linear-gradient(#f6f6f6 50%, #ededed 50%);
  color: #555;
}
.ok { width: 45px; }
.cancel { width: 66px; }
```
